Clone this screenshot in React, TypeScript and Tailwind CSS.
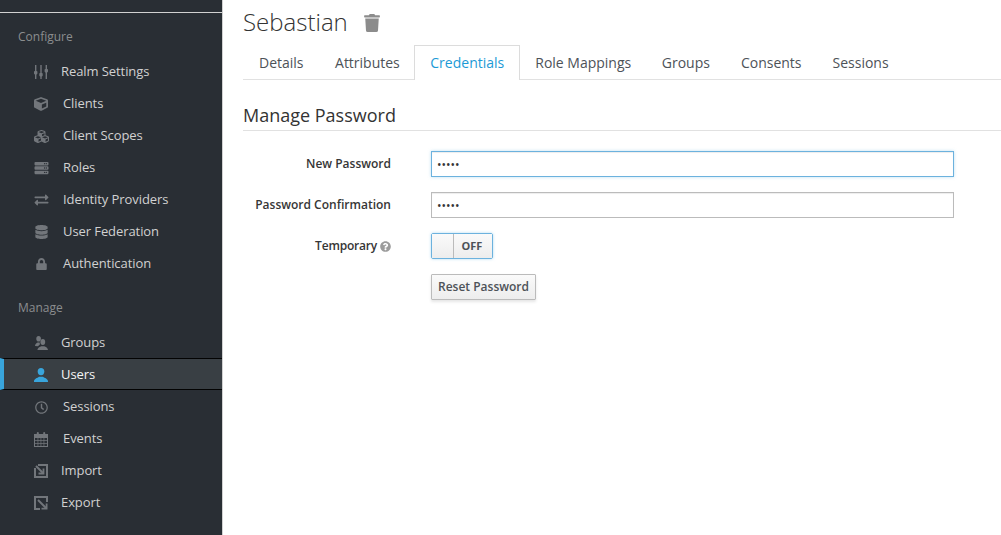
import { ReactNode } from "react";
import {
  FaCube,
  FaCubes,
  FaServer,
  FaExchangeAlt,
  FaDatabase,
  FaLock,
  FaRegClock,
  FaTrash,
  FaQuestionCircle,
} from "react-icons/fa";

const SlidersIcon = () => (
  <svg viewBox="0 0 14 14" className="h-[14px] w-[14px]" fill="currentColor">
    <rect x="1" y="0" width="1.4" height="14" />
    <rect x="6.3" y="0" width="1.4" height="14" />
    <rect x="11.6" y="0" width="1.4" height="14" />
    <rect x="0" y="6" width="3.4" height="3.4" rx="0.8" />
    <rect x="5.3" y="8" width="3.4" height="3.4" rx="0.8" />
    <rect x="10.6" y="4" width="3.4" height="3.4" rx="0.8" />
  </svg>
);

const GroupsIcon = () => (
  <svg viewBox="0 0 14 14" className="h-[14px] w-[14px]" fill="currentColor">
    <ellipse cx="4.6" cy="2.8" rx="2.3" ry="2.8" />
    <path d="M1 10c0-1.8 1.6-2.8 2.6-3.4h2L6 8.2 4 10.2z" />
    <ellipse cx="8.8" cy="6" rx="2.4" ry="2.9" />
    <path d="M3.4 14c0-2.2 2.4-3 4-3.8h2.8c1.6.8 3.8 1.6 3.8 3.8z" />
  </svg>
);

const UserIcon = () => (
  <svg viewBox="0 0 14 14" className="h-[14px] w-[14px]" fill="currentColor">
    <ellipse cx="7" cy="3.6" rx="3.3" ry="3.6" />
    <path d="M0 14v-.6c0-2.4 3.4-3.4 5-4.6h4c1.6 1.2 5 2.2 5 4.6v.6z" />
  </svg>
);

const CalendarIcon = () => (
  <svg viewBox="0 0 14 15" className="h-[15px] w-[14px]" fill="currentColor">
    <path d="M0 2h14v13H0zM1 6v8h12V6z" />
    <rect x="2.8" y="0" width="2" height="3.6" rx="1" />
    <rect x="9.2" y="0" width="2" height="3.6" rx="1" />
    <path d="M1 8.3h12v.7H1zM1 11h12v.7H1zM3.6 6h.7v8h-.7zM6.6 6h.7v8h-.7zM9.6 6h.7v8h-.7z" />
  </svg>
);

const ImportIcon = () => (
  <svg viewBox="0 0 14 14" className="h-[14px] w-[14px]" fill="currentColor">
    <path d="M4 0H14V14H0V4H2V12H12V2H4Z" />
    <path d="M2 2 9 9" stroke="currentColor" strokeWidth="2" fill="none" />
    <path d="M9.5 4.5v5H4.5" stroke="currentColor" strokeWidth="1.8" fill="none" />
  </svg>
);

const ExportIcon = () => (
  <svg viewBox="0 0 14 14" className="h-[14px] w-[14px]" fill="currentColor">
    <path d="M0 0H14V6H12V2H2V12H6V14H0Z" />
    <path d="M4 4 12 12" stroke="currentColor" strokeWidth="2" fill="none" />
    <path d="M12.6 7.5v5.1H7.5" stroke="currentColor" strokeWidth="1.8" fill="none" />
  </svg>
);

type NavItem = { label: string; icon: ReactNode; box: string; active?: boolean };

const configureItems: NavItem[] = [
  { label: "Realm Settings", icon: <SlidersIcon />, box: "w-[27px]" },
  { label: "Clients", icon: <FaCube className="h-[14px] w-[14px]" />, box: "w-[29px]" },
  { label: "Client Scopes", icon: <FaCubes className="h-[15px] w-[15px]" />, box: "w-[29px]" },
  { label: "Roles", icon: <FaServer className="h-[14px] w-[15px]" />, box: "w-[29px]" },
  { label: "Identity Providers", icon: <FaExchangeAlt className="h-[14px] w-[15px]" />, box: "w-[29px]" },
  { label: "User Federation", icon: <FaDatabase className="ml-[1px] h-[14px] w-[13px]" />, box: "w-[29px]" },
  { label: "Authentication", icon: <FaLock className="ml-[2px] h-[12px] w-[11px]" />, box: "w-[29px]" },
];

const manageItems: NavItem[] = [
  { label: "Groups", icon: <GroupsIcon />, box: "w-[27px]" },
  { label: "Users", icon: <UserIcon />, box: "w-[27px]", active: true },
  { label: "Sessions", icon: <FaRegClock className="ml-[1px] h-[13px] w-[13px]" />, box: "w-[29px]" },
  { label: "Events", icon: <CalendarIcon />, box: "w-[29px]" },
  { label: "Import", icon: <ImportIcon />, box: "w-[27px]" },
  { label: "Export", icon: <ExportIcon />, box: "w-[27px]" },
];

function SideLink({ item }: { item: NavItem }) {
  if (item.active) {
    return (
      <div className="-mt-[1px] mb-[1px] flex h-[32px] items-center border-y border-[#030303] border-l-[4px] border-l-[#39a5dc] bg-[#393f44] pl-[30px] pt-[1px] text-[13px] tracking-[-0.08px] text-[#f5f5f5]">
        <span className={`flex items-center text-[#39a5dc] ${item.box}`}>{item.icon}</span>
        {item.label}
      </div>
    );
  }
  return (
    <div className="flex h-[32px] items-center pl-[34px] text-[13px] tracking-[-0.08px] text-[#d1d1d1]">
      <span className={`flex items-center text-[#72767b] ${item.box}`}>{item.icon}</span>
      {item.label}
    </div>
  );
}

const tabs = [
  { label: "Details", pad: "pl-[16px] pr-[16px]" },
  { label: "Attributes", pad: "pl-[15.5px] pr-[14.5px]" },
  { label: "Credentials", pad: "", active: true },
  { label: "Role Mappings", pad: "pl-[15px] pr-[15px]" },
  { label: "Groups", pad: "px-[15.5px]" },
  { label: "Consents", pad: "px-[15.5px]" },
  { label: "Sessions", pad: "px-[15.5px]" },
];

export default function App() {
  return (
    <div className="flex h-[535px] w-[1001px] overflow-hidden bg-white font-['Open_Sans',sans-serif]">
      <aside className="h-full w-[223px] shrink-0 border-r border-[#d1d1d1] bg-[#292e34]">
        <div className="h-[13px] border-b border-[#d1d1d1]" />
        <div className="flex h-[43px] items-center pl-[18px] pt-[4px] text-[12px] text-[#8b8d8f]">Configure</div>
        {configureItems.map((item) => (
          <SideLink key={item.label} item={item} />
        ))}
        <div className="flex h-[47px] items-center pl-[18px] pt-[9px] text-[12px] text-[#8b8d8f]">Manage</div>
        {manageItems.map((item) => (
          <SideLink key={item.label} item={item} />
        ))}
      </aside>

      <main className="min-w-0 flex-1 pl-[20px]">
        <div className="flex h-[45px] items-start pt-[5px]">
          <h1 className="text-[24px] leading-[34px] font-light text-[#333]">Sebastian</h1>
          <FaTrash className="ml-[16px] mt-[9px] h-[18px] w-[16px] text-[#8c8c8c]" />
        </div>

        {/* Tabs */}
        <div className="flex h-[35px] border-b border-[#e1e1e1]">
          {tabs.map((tab) =>
            tab.active ? (
              <div
                key={tab.label}
                className="h-[35px] border border-b-0 border-[#dcdcdc] bg-white px-[15px] pt-[7px] text-[14px] leading-[20px] text-[#1c9ad6]"
              >
                {tab.label}
              </div>
            ) : (
              <div key={tab.label} className={`h-[34px] pt-[8px] text-[14px] leading-[20px] text-[#4d5258] ${tab.pad}`}>
                {tab.label}
              </div>
            ),
          )}
        </div>

        <h2 className="mt-[22px] h-[29px] border-b border-[#e1e1e1] text-[18px] leading-[27px] text-[#333]">
          Manage Password
        </h2>

        <div className="mt-[20px]">
          <div className="flex h-[26px] items-center">
            <label className="w-[148px] text-right text-[12px] font-semibold text-[#363636]">New Password</label>
            <input
              type="password"
              readOnly
              value="•••••"
              className="ml-[40px] h-[26px] w-[523px] border border-[#6cb2de] bg-white px-[5px] text-[12px] text-[#363636] shadow-[inset_0_1px_1px_rgba(3,3,3,0.075),0_0_3px_rgba(125,195,232,0.5)] outline-none"
            />
          </div>
          <div className="mt-[15px] flex h-[26px] items-center">
            <label className="w-[148px] text-right text-[12px] font-semibold text-[#363636]">
              Password Confirmation
            </label>
            <input
              type="password"
              readOnly
              value="•••••"
              className="ml-[40px] h-[26px] w-[523px] border border-[#bbb] bg-white px-[5px] text-[12px] text-[#363636] shadow-[inset_0_1px_1px_rgba(3,3,3,0.075)] outline-none"
            />
          </div>
          <div className="mt-[15px] flex h-[26px] items-center">
            <label className="flex w-[148px] items-center justify-end gap-[3px] text-[12px] font-semibold tracking-[-0.2px] text-[#363636]">
              Temporary
              <FaQuestionCircle className="h-[11px] w-[11px] text-[#9c9c9c]" />
            </label>
            <div className="ml-[40px] flex h-[26px] w-[62px] rounded-[2px] border border-[#6cb2de] shadow-[0_0_3px_rgba(125,195,232,0.6)]">
              <div className="w-[22px] border-r border-[#bbb] bg-gradient-to-b from-[#fafafa] to-[#ededed]" />
              <div className="flex flex-1 items-center justify-center bg-gradient-to-b from-[#fafafa] to-[#ededed] pr-[2px] text-[11px] font-bold text-[#4d5258]">
                OFF
              </div>
            </div>
          </div>
          <button className="ml-[188px] mt-[15px] h-[26px] w-[105px] rounded-[1px] border border-[#bbb] bg-gradient-to-b from-[#fafafa] to-[#ededed] text-[12px] font-semibold text-[#4d5258] shadow-[0_2px_3px_rgba(3,3,3,0.1)]">
            Reset Password
          </button>
        </div>
      </main>
    </div>
  );
}
